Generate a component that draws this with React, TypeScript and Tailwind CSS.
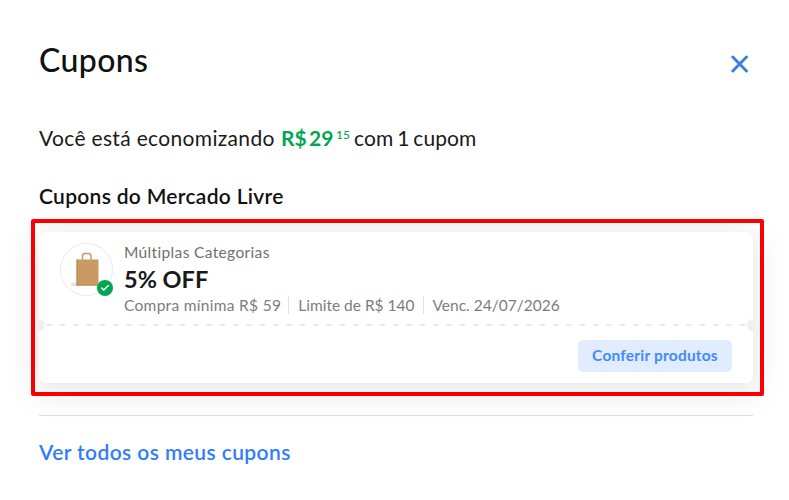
import { Check } from 'lucide-react'

const details = [
    { text: 'Compra mínima R$ 59', className: 'tracking-[0.3px]' },
    { text: 'Limite de R$ 140', className: 'ml-[7px] border-l border-[#e3e3e3] pl-[9px]' },
    { text: 'Venc. 24/07/2026', className: 'ml-2 border-l border-[#e3e3e3] pl-[9px]' },
]

function BagIcon() {
    return (
        <svg width="38" height="40" viewBox="0 0 38 40" fill="none" className="shrink-0">
            <ellipse cx="7.500" cy="34.5" rx="5" ry="1.4" fill="#e3dfda" />
            <path d="M14.500 10V6Q14.500 3.500 17 3.500H20.500Q23 3.500 23 6V10" stroke="#c99a68" strokeWidth="1.5" />
            <path d="M8.500 9.500H30.500V35.500H8.500Z" fill="#c99a66" />
            <path d="M8.500 9.500H10V35.500H8.500Z" fill="#bd8b57" />
            <path d="M8.500 34.500H30.500V35.500H8.500Z" fill="#b98650" />
        </svg>
    )
}

function CouponCard() {
    return (
        <div className="h-[151px] w-[714px] overflow-hidden rounded-lg bg-white">
            <div className="flex h-[87px] pl-[21px] pt-[10px]">
                <div className="relative mt-px flex h-[53px] w-[53px] items-center justify-center rounded-full border border-[#e8e8e8]">
                    <BagIcon />
                    <span className="absolute -bottom-px -right-px flex h-4 w-4 items-center justify-center rounded-full bg-[#00a650]">
                        <Check size={10} strokeWidth={3.5} className="text-white" />
                    </span>
                </div>
                <div className="ml-[11px] whitespace-nowrap">
                    <p className="h-[21px] text-[15.5px] leading-[21px] tracking-[0.35px] text-[#707070]">Múltiplas Categorias</p>
                    <p className="h-[33px] text-[23.5px] font-bold leading-[33px] text-[#1a1a1a]">5% OFF</p>
                    <div className="flex h-[18px] items-center text-[15.5px] leading-[18px] text-[#7c7c7c]">
                        {details.map(item => (
                            <span key={item.text} className={item.className}>{item.text}</span>
                        ))}
                    </div>
                </div>
            </div>
            <div className="flex h-3 items-center justify-between">
                <span className="-ml-1.5 h-3 w-3 shrink-0 rounded-full bg-[#f0f0f0]" />
                <svg width="700" height="2">
                    <path d="M0.500 1H699" stroke="#e2e2e2" strokeWidth="1.4" strokeDasharray="5.300 8.030" />
                </svg>
                <span className="-mr-1.5 h-3 w-3 shrink-0 rounded-full bg-[#f0f0f0]" />
            </div>
            <div className="flex justify-end pr-[21px] pt-[9px]">
                <button className="h-8 w-[154px] whitespace-nowrap rounded-[5px] bg-[#e1edff] text-[15.5px] font-bold tracking-[0.2px] text-[#438aff]">
                    Conferir produtos
                </button>
            </div>
        </div>
    )
}

export default function App() {
    return (
        <div className="h-[500px] w-[789px] overflow-hidden bg-white font-['Lato','Noto_Sans',sans-serif] text-[#1a1a1a]">
            <header className="flex h-[122px] items-start justify-between pl-[39px] pr-[40px] pt-10">
                <h1 className="text-[32px] font-medium leading-10 tracking-[0.4px] text-[#111111]">Cupons</h1>
                <button aria-label="Fechar" className="mt-[15px]">
                    <svg width="18" height="18" viewBox="0 0 18 18">
                        <path d="M1.800 2L15.500 16M15.500 2L1.800 16" stroke="#3f7fdf" strokeWidth="3" strokeLinecap="round" />
                    </svg>
                </button>
            </header>
            <p className="flex h-8 items-center whitespace-pre pl-[39px] text-[21px] leading-8">
                <span className="w-[242px] tracking-[0.33px]">Você está economizando</span>
                <span className="w-[28px] font-bold text-[#00a650]">R$</span>
                <span className="w-[27px] font-bold text-[#00a650]">29</span>
                <span className="mb-1.5 w-[18px] text-[12px] font-medium leading-3 text-[#00a650]">15</span>
                <span className="tracking-[0.1px]">com</span>
                <span className="-mx-[1.5px]"> 1 </span>
                <span className="tracking-[0.1px]">cupom</span>
            </p>
            <h2 className="mt-[28px] h-7 pl-[39px] text-[21px] font-semibold leading-7 tracking-[0.3px] text-[#111111]">Cupons do Mercado Livre</h2>
            <section className="ml-[31px] mt-[9px] h-[177px] w-[733px] rounded-[2px] border-4 border-[#ff0000] pl-1 pt-[9px]">
                <div className="w-[714px] rounded-lg shadow-[0_6px_30px_6px_rgba(0,0,0,0.09)]">
                    <CouponCard />
                </div>
            </section>
            <footer className="mx-[39px] mt-[19px] w-[714px] border-t border-[#dedede] pt-[22px]">
                <a href="#cupons" className="text-[21px] font-semibold leading-7 tracking-[0.4px] text-[#2f7cff]">Ver todos os meus cupons</a>
            </footer>
        </div>
    )
}
